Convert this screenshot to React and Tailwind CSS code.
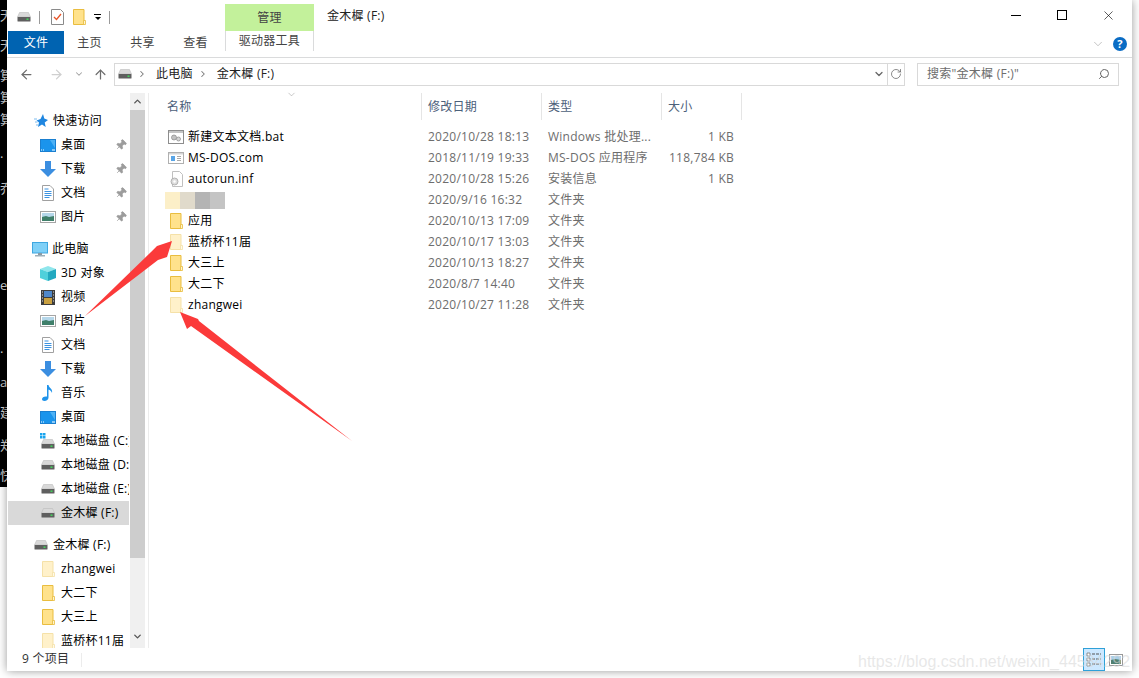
import React from 'react';
import { ArrowLeft, ArrowRight, ArrowUp, ChevronDown, ChevronRight, ChevronUp, Pin, RotateCw, Search, X } from 'lucide-react';

const Drive = ({ className = '' }) => (
  <svg viewBox="0 0 14 10" className={`w-[14px] h-[10px] shrink-0 ${className}`}>
    <path d="M2.500 0.500h9l2 4.500H0.500z" fill="#d9d9d9" stroke="#b5b5b5" strokeWidth="0.500" />
    <rect x="0.500" y="5" width="13" height="4.500" rx="0.500" fill="#5f5f5f" />
    <rect x="9.500" y="6.500" width="2" height="1.400" fill="#3fe05a" />
  </svg>
);

const DriveC = () => (
  <svg viewBox="0 0 16 16" className="w-4 h-4 shrink-0">
    <path d="M0 0h2.500v2.500H0zM3 0h2.500v2.500H3zM0 3h2.500v2.500H0zM3 3h2.500v2.500H3z" fill="#18a4ee" />
    <path d="M3.500 6.500h9l2 4.500H1.500z" fill="#d9d9d9" stroke="#b5b5b5" strokeWidth="0.500" />
    <rect x="1.500" y="11" width="13" height="4.500" rx="0.500" fill="#5f5f5f" />
    <rect x="10.500" y="12.500" width="2" height="1.400" fill="#3fe05a" />
  </svg>
);

const Folder = ({ faded }) => (
  <svg viewBox="0 0 13 16" className={`w-[13px] h-4 shrink-0 ${faded ? 'opacity-45' : ''}`}>
    <path d="M0.500 0.500h10.500v15H0.500z" fill="#ffe28c" stroke="#e9bd3f" />
    <path d="M10.500 11.500h2v4h-2z" fill="#fff4cf" stroke="#e9bd3f" strokeWidth="0.800" />
  </svg>
);

const Desktop = () => (
  <svg viewBox="0 0 16 13" className="w-4 h-[13px] shrink-0">
    <rect x="0.500" y="0.500" width="15" height="12" fill="#1a94ec" stroke="#1a7fd0" />
    <path d="M10 1h5v8z" fill="#4db1f5" />
    <path d="M1 11h1M3 11h1M12 11h3" stroke="#fff" strokeWidth="1" />
  </svg>
);

const Download = () => (
  <svg viewBox="0 0 16 16" className="w-4 h-4 shrink-0">
    <path d="M5 0h6v8h5l-8 8-8-8h5z" fill="#3b8ee0" />
  </svg>
);

const Doc = () => (
  <svg viewBox="0 0 12 16" className="w-3 h-4 shrink-0">
    <path d="M0.500 0.500h7.500l3.500 3.500v11.500h-11z" fill="#fff" stroke="#a0a0a0" />
    <path d="M2.500 4h4M2.500 6.500h7M2.500 8.500h7M2.500 10.500h7M2.500 12.500h5" stroke="#3d93e0" strokeWidth="1" />
  </svg>
);

const Picture = () => (
  <svg viewBox="0 0 16 12" className="w-4 h-3 shrink-0">
    <rect x="0.500" y="0.500" width="15" height="11" fill="#fff" stroke="#a5a5a5" />
    <rect x="2" y="2" width="12" height="4" fill="#b5d7ea" />
    <path d="M2 6l4-1 3 1 5-1v5H2z" fill="#3f7f6a" />
  </svg>
);

const Computer = () => (
  <svg viewBox="0 0 16 15" className="w-4 h-[15px] shrink-0">
    <rect x="0.500" y="0.500" width="15" height="10.500" fill="#7fd0f7" stroke="#3ea7e0" />
    <rect x="6" y="11" width="4" height="2" fill="#8a9aa5" />
    <rect x="3" y="13" width="10" height="1.500" fill="#9eb0ba" />
  </svg>
);

const Cube = () => (
  <svg viewBox="0 0 16 15" className="w-4 h-[15px] shrink-0">
    <path d="M8 0l8 3-8 3-8-3z" fill="#8fe6ec" />
    <path d="M0 3l8 3v9l-8-3z" fill="#4fd0db" />
    <path d="M16 3l-8 3v9l8-3z" fill="#22a9c0" />
  </svg>
);

const Video = () => (
  <svg viewBox="0 0 14 15" className="w-[14px] h-[15px] shrink-0">
    <rect width="14" height="15" fill="#3d3d3d" />
    <rect x="3" y="1" width="8" height="6" fill="#4f87c9" />
    <rect x="3" y="8" width="8" height="6" fill="#c9a040" />
    <path d="M1 2h1M1 5h1M1 8h1M1 11h1M12 2h1M12 5h1M12 8h1M12 11h1" stroke="#ddd" />
  </svg>
);

const Music = () => (
  <svg viewBox="0 0 12 16" className="w-3 h-4 shrink-0">
    <path d="M5 0h1.500c.4 3 4.500 3.500 3.500 8-.6-2-2-3-3.500-3.500V12.500C6.500 14.500 4.500 16 2.500 16 .8 16 0 15 0 14c0-1.500 2-3 5-2.500z" fill="#1f93ea" />
  </svg>
);

const BatIcon = () => (
  <svg viewBox="0 0 16 14" className="w-4 h-[14px] shrink-0">
    <rect x="0.500" y="0.500" width="15" height="13" fill="#fff" stroke="#8d8d8d" />
    <rect x="1" y="1" width="14" height="2" fill="#c5c5c5" />
    <circle cx="6" cy="7.500" r="2.500" fill="#c2c2c2" stroke="#888" strokeWidth="0.700" />
    <circle cx="10.500" cy="9" r="2" fill="#d5d5d5" stroke="#888" strokeWidth="0.700" />
  </svg>
);

const ComIcon = () => (
  <svg viewBox="0 0 16 12" className="w-4 h-3 shrink-0">
    <rect x="0.500" y="0.500" width="15" height="11" fill="#fff" stroke="#b0b0b0" />
    <rect x="1" y="1" width="14" height="1.500" fill="#d5d5d5" />
    <rect x="3" y="4" width="4" height="5" fill="#5aa5e6" />
    <path d="M9 4.500h4M9 6.500h4M9 8.500h4" stroke="#a8a8a8" />
  </svg>
);

const InfIcon = () => (
  <svg viewBox="0 0 14 16" className="w-[14px] h-4 shrink-0">
    <path d="M3.500 0.500h7l3 3v12h-10z" fill="#fff" stroke="#c0c0c0" />
    <circle cx="5.500" cy="10.500" r="3.500" fill="#dcdcdc" stroke="#a5a5a5" strokeWidth="0.800" />
    <circle cx="5.500" cy="10.500" r="1.200" fill="#fff" />
  </svg>
);

const TaskIcon = () => (
  <svg viewBox="0 0 13 16" className="w-[13px] h-4 shrink-0">
    <path d="M0.500 0.500h9l3 3v12h-12z" fill="#fff" stroke="#8a8a8a" />
    <path d="M3 8l2.500 2.500L10 5" fill="none" stroke="#e8562a" strokeWidth="1.300" />
  </svg>
);

const QuickStar = () => (
  <svg viewBox="0 0 14 14" className="w-[14px] h-[14px] shrink-0">
    <path d="M9 0l1.300 4.500L14 6l-3.300 2.500 1 4.500L8 10.500 4 13l1-4.500L2.500 6.500 6.500 5z" fill="#1f86e0" />
    <path d="M0 5h3M1 8h2.500M2 11h2" stroke="#7cbcf0" strokeWidth="1" />
  </svg>
);

const DetailsView = () => (
  <svg viewBox="0 0 16 17" className="w-4 h-[17px]">
    <path d="M1 2h3v3H1zM1 7h3v3H1zM1 12h3v3H1z" fill="#fff" stroke="#777" strokeWidth="0.800" />
    <path d="M6 3h9M6 8h9M6 13h9" stroke="#555" strokeWidth="1" strokeDasharray="3 1" />
  </svg>
);

const IconsView = () => (
  <svg viewBox="0 0 14 12" className="w-[14px] h-3">
    <rect x="0.500" y="0.500" width="13" height="11" fill="#fff" stroke="#999" />
    <rect x="2" y="2" width="10" height="4" fill="#a9cfe8" />
    <path d="M2 6l4-1 6 1v4H2z" fill="#4f7f70" />
  </svg>
);

const stripRows = [
  { t: '天', c: 'mt-[7px]' },
  { t: '天', c: 'mt-[14px]' },
  { t: '算', c: 'mt-[14px]' },
  { t: '算', c: 'mt-[6px]' },
  { t: '算', c: 'mt-[6px]' },
  { t: '·', c: 'mt-[22px]' },
  { t: '乔', c: 'mt-[15px]' },
  { t: 'e', c: 'mt-[81px]' },
  { t: '·', c: 'mt-[51px]' },
  { t: 'a', c: 'mt-[14px]' },
  { t: '建', c: 'mt-[14px]' },
  { t: '郑', c: 'mt-[17px]' },
  { t: '快', c: 'mt-[14px]' },
];

const PinIcon = () => <Pin size={12} strokeWidth={1.500} className="text-[#9c9c9c] fill-[#9c9c9c] rotate-45" />;

const NavRow = ({ icon, label, indent = 'pl-[32px]', gap = 'ml-[5px]', pin, selected }) => (
  <div className={`relative flex h-6 items-center whitespace-nowrap overflow-hidden ${indent} ${selected ? 'bg-[#d9d9d9]' : ''}`}>
    <div className="flex w-4 shrink-0 items-center justify-center">{icon}</div>
    <span className={`${gap} text-black`}>{label}</span>
    {pin && (
      <div className="absolute right-[2px] top-[6px]">
        <PinIcon />
      </div>
    )}
  </div>
);

const files = [
  { icon: <BatIcon />, name: '新建文本文档.bat', date: '2020/10/28 18:13', type: 'Windows 批处理...', size: '1 KB' },
  { icon: <ComIcon />, name: 'MS-DOS.com', date: '2018/11/19 19:33', type: 'MS-DOS 应用程序', size: '118,784 KB' },
  { icon: <InfIcon />, name: 'autorun.inf', date: '2020/10/28 15:26', type: '安装信息', size: '1 KB' },
  { icon: <Folder />, name: '', date: '2020/9/16 16:32', type: '文件夹', blur: true },
  { icon: <Folder />, name: '应用', date: '2020/10/13 17:09', type: '文件夹' },
  { icon: <Folder faded />, name: '蓝桥杯11届', date: '2020/10/17 13:03', type: '文件夹' },
  { icon: <Folder />, name: '大三上', date: '2020/10/13 18:27', type: '文件夹' },
  { icon: <Folder />, name: '大二下', date: '2020/8/7 14:40', type: '文件夹' },
  { icon: <Folder faded />, name: 'zhangwei', date: '2020/10/27 11:28', type: '文件夹' },
];

const FileRow = ({ f }) => (
  <div className="relative flex h-[21px] items-center whitespace-nowrap">
    <div className="ml-[20px] flex w-4 shrink-0 justify-center">{f.icon}</div>
    <span className="ml-1 w-[240px] shrink-0 text-black">{f.name}</span>
    <span className="w-[120px] shrink-0 text-[#6d6d6d]">{f.date}</span>
    <span className="w-[113px] shrink-0 text-[#6d6d6d]">{f.type}</span>
    <span className="w-[73px] shrink-0 text-right text-[#6d6d6d]">{f.size}</span>
    {f.blur && (
      <div className="absolute left-[17px] top-[3px] flex h-[17px]">
        <div className="w-[15px] bg-[#fcefc8]" />
        <div className="w-[15px] bg-[#e0dacb]" />
        <div className="w-[15px] bg-[#b4b4b4]" />
        <div className="w-[15px] bg-[#c4c4c4]" />
      </div>
    )}
  </div>
);

const HeadCell = ({ label, w, pl = 'pl-[6px]' }) => (
  <div className={`flex h-full shrink-0 items-center border-r border-[#e5e5e5] text-[#4c607a] ${w} ${pl}`}>{label}</div>
);

export default function App() {
  return (
    <div className="relative flex h-[678px] w-[1139px] overflow-hidden bg-white font-['Open_Sans','Noto_Sans_CJK_SC',sans-serif] text-[12px] tracking-[0.25px]">
      {/* desktop behind the window */}
      <div className="flex h-[487px] w-[7px] shrink-0 flex-col overflow-hidden bg-black text-[13px] leading-4 text-[#d0d0d0]">
        {stripRows.map((r, i) => (
          <span key={i} className={`h-4 whitespace-nowrap ${r.c}`}>{r.t}</span>
        ))}
      </div>

      <div className="relative flex h-[671px] w-[1125px] shrink-0 flex-col bg-white shadow-[0_0_9px_rgba(0,0,0,0.4)]">
        {/* title bar */}
        <div className="flex h-[31px] shrink-0 items-end">
          <div className="flex h-full w-[218px] items-center pt-[3px]">
            <Drive className="ml-[10px]" />
            <div className="ml-[8px] h-[13px] w-px bg-[#9a9a9a]" />
            <div className="ml-[11px]"><TaskIcon /></div>
            <div className="ml-[9px]"><Folder /></div>
            <div className="ml-[8px] flex flex-col items-center">
              <div className="h-px w-[7px] bg-black" />
              <div className="mt-[2px] h-0 w-0 border-x-[3px] border-t-[3px] border-x-transparent border-t-black" />
            </div>
            <div className="ml-[8px] h-[13px] w-px bg-[#9a9a9a]" />
          </div>
          <div className="flex h-[27px] w-[89px] items-center justify-center bg-[#c3f19b] text-[#444]">管理</div>
          <div className="ml-[13px] self-center pt-px text-[#222]">金木樨 (F:)</div>
          <div className="ml-auto mr-px flex h-[30px] self-start">
            <div className="flex w-[46px] items-center justify-center"><div className="h-px w-[10px] bg-black" /></div>
            <div className="flex w-[46px] items-center justify-center"><div className="h-[10px] w-[10px] border border-black" /></div>
            <div className="flex w-[46px] items-center justify-center"><X size={15} strokeWidth={1} className="text-black" /></div>
          </div>
        </div>

        {/* ribbon tabs */}
        <div className="flex h-[27px] shrink-0 border-b border-[#dadbdc] text-[#444]">
          <div className="ml-px flex h-[23px] w-[56px] items-center justify-center bg-[#0063b1] text-white">文件</div>
          <div className="-ml-px flex h-[23px] w-[53px] items-center justify-center">主页</div>
          <div className="flex h-[23px] w-[53px] items-center justify-center">共享</div>
          <div className="flex h-[23px] w-[53px] items-center justify-center">查看</div>
          <div className="ml-[3px] flex h-[20px] w-[89px] items-center justify-center border-x border-[#dadbdc]">驱动器工具</div>
          <div className="ml-auto flex h-[26px] items-center pr-[5px]">
            <ChevronDown size={14} strokeWidth={1} className="text-[#999]" />
            <div className="ml-[8px] flex h-[14px] w-[14px] items-center justify-center rounded-full bg-[#0a6cc4] text-[11px] font-bold text-white">?</div>
          </div>
        </div>

        {/* address bar */}
        <div className="flex h-[32px] shrink-0 items-center">
          <ArrowLeft size={15} strokeWidth={2} className="ml-[12px] text-[#6d6d6d]" />
          <ArrowRight size={15} strokeWidth={2} className="ml-[15px] text-[#cfcfcf]" />
          <ChevronDown size={10} strokeWidth={2.500} className="ml-[10px] text-[#a0a0a0]" />
          <ArrowUp size={15} strokeWidth={2} className="ml-[9px] text-[#6d6d6d]" />
          <div className="ml-[6px] flex h-[23px] w-[791px] items-center border border-[#d9d9d9] text-[#222]">
            <Drive className="ml-[3px]" />
            <ChevronRight size={10} strokeWidth={2.500} className="ml-[5px] text-[#777]" />
            <span className="ml-[9px]">此电脑</span>
            <ChevronRight size={10} strokeWidth={2.500} className="ml-[5px] text-[#777]" />
            <span className="ml-[9px]">金木樨 (F:)</span>
            <ChevronDown size={12} strokeWidth={2.500} className="ml-auto mr-[1px] text-[#666]" />
            <div className="ml-[1px] flex h-full w-[17px] items-center justify-center border-l border-[#d9d9d9]">
              <RotateCw size={12} strokeWidth={1.500} className="text-[#666]" />
            </div>
          </div>
          <div className="ml-[12px] flex h-[23px] w-[202px] items-center border border-[#d9d9d9] pl-[9px] text-[#6d6d6d]">
            <span>搜索"金木樨 (F:)"</span>
            <Search size={12} strokeWidth={2} className="ml-auto mr-[8px] -scale-x-100 text-[#666]" />
          </div>
        </div>

        {/* main */}
        <div className="flex min-h-0 flex-1">
          <div className="w-[123px] shrink-0 overflow-hidden pl-px pr-px">
            <div className="pt-[19px]">
              <NavRow icon={<QuickStar />} label="快速访问" indent="pl-[25px]" gap="ml-[4px]" />
              <NavRow icon={<Desktop />} label="桌面" pin />
              <NavRow icon={<Download />} label="下载" pin />
              <NavRow icon={<Doc />} label="文档" pin />
              <NavRow icon={<Picture />} label="图片" pin />
            </div>
            <div className="mt-2">
              <NavRow icon={<Computer />} label="此电脑" indent="pl-[24px]" gap="ml-[4px]" />
              <NavRow icon={<Cube />} label="3D 对象" />
              <NavRow icon={<Video />} label="视频" />
              <NavRow icon={<Picture />} label="图片" />
              <NavRow icon={<Doc />} label="文档" />
              <NavRow icon={<Download />} label="下载" />
              <NavRow icon={<Music />} label="音乐" />
              <NavRow icon={<Desktop />} label="桌面" />
              <NavRow icon={<DriveC />} label="本地磁盘 (C:)" />
              <NavRow icon={<Drive />} label="本地磁盘 (D:)" />
              <NavRow icon={<Drive />} label="本地磁盘 (E:)" />
              <NavRow icon={<Drive />} label="金木樨 (F:)" selected />
            </div>
            <div className="mt-2">
              <NavRow icon={<Drive />} label="金木樨 (F:)" indent="pl-[25px]" gap="ml-[4px]" />
              <NavRow icon={<Folder faded />} label="zhangwei" />
              <NavRow icon={<Folder />} label="大二下" />
              <NavRow icon={<Folder />} label="大三上" />
              <NavRow icon={<Folder faded />} label="蓝桥杯11届" />
            </div>
          </div>

          {/* sidebar scrollbar */}
          <div className="mt-[3px] flex w-[15px] shrink-0 flex-col bg-[#f0f0f0]">
            <div className="flex h-[17px] items-center justify-center">
              <ChevronUp size={11} strokeWidth={3} className="text-[#555]" />
            </div>
            <div className="h-[448px] bg-[#cdcdcd]" />
            <div className="mt-auto flex h-[20px] items-center justify-center pb-[3px]">
              <ChevronDown size={11} strokeWidth={3} className="text-[#555]" />
            </div>
          </div>

          {/* file list */}
          <div className="ml-[3px] mt-[3px] min-w-0 flex-1 border-l border-[#ececec]">
            <div className="relative flex h-[27px] pl-[18px]">
              <HeadCell label="名称" w="w-[255px]" pl="pl-0" />
              <HeadCell label="修改日期" w="w-[120px]" />
              <HeadCell label="类型" w="w-[120px]" />
              <HeadCell label="大小" w="w-[80px]" />
              <ChevronDown size={11} strokeWidth={1} className="absolute left-[137px] -top-[4px] text-[#888]" />
            </div>
            <div className="mt-[6px] -ml-px">
              {files.map((f, i) => (
                <FileRow key={i} f={f} />
              ))}
            </div>
          </div>
        </div>

        {/* status bar */}
        <div className="flex h-[23px] shrink-0 items-center bg-white">
          <span className="mb-[2px] ml-[15px] text-[#333]">9 个项目</span>
          <div className="ml-[12px] h-[14px] w-px bg-[#ececec]" />
          <div className="ml-auto mr-[9px] flex items-center gap-[4px]">
            <div className="flex h-[23px] w-[22px] items-center justify-center border border-[#2fa0d8] bg-[#cce8ff]">
              <DetailsView />
            </div>
            <IconsView />
          </div>
        </div>
      </div>

      {/* red annotation arrows drawn on top of the screenshot */}
      <svg viewBox="0 0 1139 678" className="pointer-events-none absolute inset-0 h-full w-full">
        <polygon points="85,316 151,252 157,246 172,241 167,257 158,260" fill="#fb3a3a" />
        <polygon points="352,441 199,321 198,319 180,312 187,329 191,326" fill="#fb3a3a" />
      </svg>

      {/* blog watermark */}
      <div className="pointer-events-none absolute left-[858px] top-[650px] whitespace-nowrap font-['Liberation_Sans',sans-serif] text-[16px] tracking-normal text-[#d8d8d8]/60">
        https://blog.csdn.net/weixin_44584292
      </div>
    </div>
  );
}
